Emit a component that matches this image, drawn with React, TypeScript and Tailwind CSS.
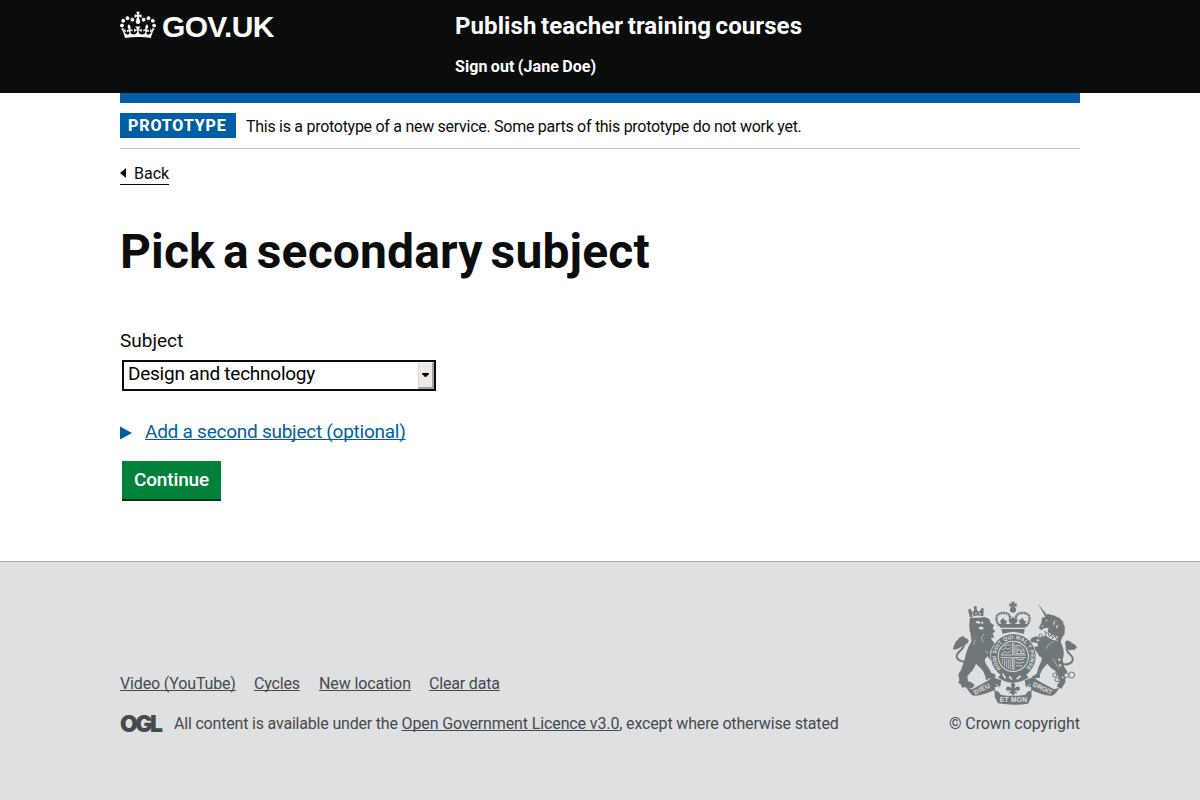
import type { ReactNode } from "react";

function Crown() {
  return (
    <svg viewBox="0 0 132 97" className="h-[30px] w-9 fill-current" aria-hidden="true">
      <path
        fillRule="evenodd"
        d="M25 30.2c3.5 1.5 7.7-.2 9.1-3.7 1.5-3.6-.2-7.8-3.9-9.2-3.6-1.4-7.6.3-9.1 3.9-1.4 3.5.3 7.5 3.9 9zM9 39.5c3.6 1.5 7.8-.2 9.2-3.7 1.5-3.6-.2-7.8-3.9-9.1-3.6-1.5-7.6.2-9.1 3.8-1.4 3.5.3 7.5 3.8 9zM4.4 57.2c3.5 1.5 7.7-.2 9.1-3.8 1.5-3.6-.2-7.7-3.9-9.1-3.5-1.5-7.6.3-9.1 3.8-1.4 3.5.3 7.6 3.9 9.1zm38.3-21.4c3.5 1.5 7.7-.2 9.1-3.8 1.5-3.6-.2-7.7-3.9-9.1-3.6-1.5-7.6.3-9.1 3.8-1.3 3.6.4 7.7 3.9 9.1zm64.4-5.6c-3.6 1.5-7.8-.2-9.1-3.7-1.5-3.6.2-7.8 3.8-9.2 3.6-1.4 7.7.3 9.2 3.9 1.3 3.5-.4 7.5-3.9 9zm15.9 9.3c-3.6 1.5-7.7-.2-9.1-3.7-1.5-3.6.2-7.8 3.7-9.1 3.6-1.5 7.7.2 9.2 3.8 1.5 3.5-.3 7.5-3.8 9zm4.7 17.7c-3.6 1.5-7.8-.2-9.2-3.8-1.5-3.6.2-7.7 3.9-9.1 3.6-1.5 7.7.3 9.2 3.8 1.3 3.5-.4 7.6-3.9 9.1zM89.3 35.8c-3.6 1.5-7.8-.2-9.2-3.8-1.4-3.6.2-7.7 3.9-9.1 3.6-1.5 7.7.3 9.2 3.8 1.4 3.6-.3 7.7-3.9 9.1zM69.7 17.7l8.9 4.7V9.3l-8.9 2.8c-.2-.3-.5-.6-.9-.9L72.4 0H59.6l3.5 11.2c-.3.3-.6.5-.9.9l-8.8-2.8v13.1l8.8-4.7c.3.3.6.7.9.9l-5 15.4v.1c-.2.8-.4 1.6-.4 2.4 0 4.1 3.1 7.5 7 8.1h.2c.3 0 .7.1 1 .1.4 0 .7 0 1-.1h.2c4-.6 7.1-4.1 7.1-8.1 0-.8-.1-1.7-.4-2.4V34l-5.1-15.4c.4-.2.7-.6 1-.9zM66 92.8c16.9 0 32.8 1.1 47.1 3.2 4-16.9 8.9-26.7 14-33.5l-9.6-3.4c1 4.9 1.1 7.2 0 10.2-1.5-1.4-3-4.3-4.2-8.7L108.6 76c2.8-2 5-3.2 7.5-3.3-4.4 9.4-10 11.9-13.6 11.2-4.3-.8-6.3-4.6-5.6-7.9 1-4.7 5.7-5.9 8-.5 4.3-8.7-3-11.4-7.6-8.8 7.1-7.2 7.9-13.5 2.1-21.1-8 6.1-8.1 12.3-4.5 20.8-4.7-5.4-12.1-2.5-9.5 6.2 3.4-5.2 7.9-2 7.2 3.1-.6 4.3-6.4 7.8-13.5 7.2-10.3-.9-10.9-8-11.2-13.8 2.5-.5 7.1 1.8 11 7.3L80.2 60c-4.1 4.4-8 5.3-12.3 5.4 1.4-4.4 8-11.6 8-11.6H55.5s6.4 7.2 7.9 11.6c-4.2-.1-8-1-12.3-5.4l1.4 16.4c3.9-5.5 8.5-7.7 10.9-7.3-.3 5.8-.9 12.8-11.1 13.8-7.2.6-12.9-2.9-13.5-7.2-.7-5 3.8-8.3 7.1-3.1 2.7-8.7-4.6-11.6-9.4-6.2 3.7-8.5 3.6-14.7-4.6-20.8-5.8 7.6-5 13.9 2.2 21.1-4.7-2.6-11.9.1-7.7 8.8 2.3-5.5 7.1-4.2 8.1.5.7 3.3-1.3 7.1-5.7 7.9-3.5.7-9-1.8-13.5-11.2 2.5.1 4.7 1.3 7.5 3.3l-4.7-15.4c-1.2 4.4-2.7 7.2-4.3 8.7-1.1-3-.9-5.3 0-10.2l-9.5 3.4c5 6.9 9.9 16.7 14 33.5 14.8-2.1 30.8-3.2 47.7-3.2z"
      />
    </svg>
  );
}

const DARK = "#6f777b";
const LIGHT = "#dee0e2";

function RoyalArms() {
  return (
    <svg viewBox="36 18 378 312" className="h-[104px] w-[126px]" aria-hidden="true">
      <g fill={DARK}>
        {/* lion */}
        <path d="M91 68C86 76 91 82 87 90C91 98 86 106 92 114C90 122 96 130 94 140C84 154 78 172 74 192C70 206 66 216 63 226L55 238L58 254L55 264L62 268L66 278L76 276L84 282L98 278L104 270L94 262L84 258L82 244L92 232C100 224 104 216 108 206C118 216 124 220 129 228L136 244L138 256L150 250L166 248L166 238L154 234L148 222L138 208L134 194L142 184L152 196L160 206L168 202L164 190L154 180L150 168L160 166L168 176L172 160L166 146L158 138L152 128L163 128L158 114L166 110L158 100L162 90L152 84L148 72L134 66L114 68Z" />
        <path d="M90 68L85 48Q89 44 94 46L98 54L103 43H110L115 52L122 44Q127 43 131 47L130 64Q108 58 90 68Z" />
        <circle cx="89" cy="45" r="4" />
        <circle cx="106" cy="38" r="5" />
        <circle cx="127" cy="43" r="4" />
        <path d="M36 162C44 162 38 148 46 146C44 138 50 138 54 134C56 126 66 126 70 122C72 132 86 128 86 138C84 148 70 152 60 158Q48 166 36 162Z" />
        {/* unicorn */}
        <path d="M294 26L325 65L318 69Z" />
        <path d="M323 56C336 62 344 58 350 66C360 66 362 76 370 80C368 88 378 94 374 102L374 116L366 128L362 142C372 160 374 178 368 194L372 214L382 230L376 248L376 262L364 282L350 274L360 256L352 240L346 228L332 218L322 206L308 222L300 238L300 248L282 250L274 246L290 236L296 216L304 198L306 188L298 184L290 170L276 166L278 156L294 154L292 144L278 142L272 150L267 144L274 130L288 124L300 128L314 122L322 110L326 98L312 100L304 106L296 98L304 84L306 68L316 66Z" />
        <path d="M376 140C386 130 394 146 404 148L412 158C404 158 408 166 400 164L388 166C380 160 374 154 376 140Z" />
        {/* crown */}
        <path d="M181 98H257L262 88C246 84 236 90 219 84C202 90 192 84 177 88Z" />
        <path d="M184 102H254L252 116L219 110L187 116Z" />
        <circle cx="219" cy="44" r="9" />
        <path d="M213 20H225L222 27L230 24V36L223 33L225 42H213L215 33L208 36V24L216 27Z" />
        <path d="M219 64L224 73L233 71L231 82L220 88L207 82L206 71L214 73ZM190 68L194 76L202 78L197 88L184 88L180 78ZM248 68L252 77L259 78L254 88L241 88L236 78Z" />
      </g>
      <g fill="none" stroke={DARK} strokeWidth="7">
        <path d="M80 202C62 200 50 196 50 184C50 168 78 164 72 142" strokeWidth="6" />
        <path d="M366 206C382 212 400 204 398 190C396 178 378 174 380 158C382 146 390 148 396 152" strokeWidth="6" />
        <path d="M179 92C162 74 168 54 188 54C206 52 212 62 213 84M259 92C276 74 270 54 250 54C232 52 226 62 225 84" strokeDasharray="6 1.5" />
      </g>
      <g fill={LIGHT}>
        <path d="M107 80L114 77L121 82L119 86L109 84ZM123 80L131 82L128 87L123 85ZM114 99L124 94L133 101L124 104Z" />
        <circle cx="98" cy="59" r="2.5" />
        <circle cx="108" cy="55" r="2.5" />
        <circle cx="120" cy="56" r="2.5" />
        <path d="M317 74L323 75L318 79ZM304 92L311 89L306 97ZM347 75L341 94L340 83ZM357 88L348 103L349 93Z" />
      </g>
      <g fill="none" stroke={LIGHT} strokeWidth="1.6">
        <path d="M132 116L124 130L130 142M106 134L100 150M135 167L145 175" />
        <path d="M340 140L326 148L318 162M338 190L348 206L357 221" />
      </g>
      <path d="M316 111Q334 130 354 131" fill="none" stroke={LIGHT} strokeWidth="12" />
      <path d="M314 107L318 118L324 112L328 125L334 118L338 130L345 123L351 135L356 126" fill="none" stroke={DARK} strokeWidth="3" />
      {/* chain */}
      <g fill={LIGHT} stroke={DARK} strokeWidth="3">
        <circle cx="302" cy="122" r="5" />
        <circle cx="294" cy="136" r="5" />
        <circle cx="358" cy="194" r="5" />
        <circle cx="361" cy="211" r="5" />
        <circle cx="344" cy="240" r="6" />
        <circle cx="351" cy="254" r="6" />
        <circle cx="368" cy="247" r="4" />
        <circle cx="379" cy="241" r="7" />
        <circle cx="395" cy="240" r="9" />
      </g>
      {/* garter and shield */}
      <circle cx="220" cy="184" r="69" fill={LIGHT} />
      <circle cx="220" cy="184" r="57" fill="none" stroke={DARK} strokeWidth="20" />
      <circle cx="220" cy="184" r="44" fill={DARK} />
      <path id="garter" d="M183.2 220.8A52 52 0 1 1 256.8 220.8" fill="none" />
      <text fill={LIGHT} fontFamily="Liberation Sans" fontWeight="700" fontSize="16">
        <textPath href="#garter" textLength="243" lengthAdjust="spacing">HONI SOIT QUI MAL Y PENSE</textPath>
      </text>
      <g fill="none" stroke={LIGHT} strokeWidth="2.5">
        <path d="M182 180H218V143M222 143V180H258M182 188H218V225M222 225V188H258" />
        <path d="M186 166L196 158L204 163L214 157M185 176L196 170L203 174L214 168M193 153L203 150L213 150" />
        <path d="M226 188L237 195L252 192M226 201L238 205L253 201M228 213L236 212L247 213" />
        <path d="M228 150V176M228 151H240L252 165V176H228M235 157L232 170L240 162L244 173L247 163" />
        <path d="M188 192V206M194 192V214M200 192V219M206 192V222M212 192V223" strokeWidth="2" />
      </g>
      <path d="M180 240Q219 266 260 240" fill="none" stroke={DARK} strokeWidth="20" />
      <path d="M188 236L196 250M207 244L216 253M230 252L242 243" fill="none" stroke={LIGHT} strokeWidth="5" />
      {/* ribbon */}
      <g fill={DARK}>
        <path d="M79 278L96 283L142 258L158 247L184 256L180 277L165 275L165 286C148 290 128 303 100 302C92 298 86 288 79 278Z" />
        <path d="M358 278L342 283L296 258L280 247L254 256L258 277L273 275L273 286C290 290 310 303 336 302C346 298 352 288 358 278Z" />
        <path d="M164 285L176 291L182 299Q219 306 256 299L262 291L274 285L275 305L264 326Q219 333 174 325L164 305Z" />
      </g>
      <path d="M184 264Q219 274 254 264L256 296Q219 304 183 296Z" fill={LIGHT} />
      <path
        d="M219 260L226 270L223 280L229 276Q240 271 240 285L232 288L228 284L225 290H231V295H225L219 303L213 295H207V290H213L210 284L206 288L198 285Q198 271 209 276L215 280L212 270Z"
        fill={DARK}
      />
      <path d="M168 268L180 278L188 297M270 268L258 278L250 297" fill="none" stroke={LIGHT} strokeWidth="3" />
      <g fill={LIGHT} fontFamily="Liberation Sans" fontWeight="700" fontSize="20">
        <text x="105" y="299" textLength="52" transform="rotate(-26 105 299)">DIEU</text>
        <text x="179" y="322" textLength="82">ET MON</text>
        <text x="277" y="273" textLength="62" transform="rotate(25 277 273)">DROIT</text>
      </g>
    </svg>
  );
}

function FooterLink({ children, className }: { children: ReactNode; className: string }) {
  return (
    <a href="#" className={`underline decoration-1 underline-offset-1 [text-decoration-skip-ink:none] ${className}`}>
      {children}
    </a>
  );
}

export default function App() {
  return (
    <div className="flex min-h-screen flex-col overflow-hidden bg-white font-['Roboto','Liberation_Sans',sans-serif] font-[450] text-[#0b0c0c]">
      <header className="h-[93px] bg-[#0b0c0c] text-white">
        <div className="mx-auto flex w-[960px]">
          <a href="#" className="flex w-[335px] items-start gap-1.5 pt-[10px]">
            <Crown />
            <span className="font-['Liberation_Sans',sans-serif] text-[30px] leading-[34px] font-bold tracking-[-0.65px]">GOV.UK</span>
          </a>
          <div className="flex flex-col whitespace-nowrap">
            <a href="#" className="pt-[11px] text-[24px] leading-[30px] font-bold tracking-[0.09px] [word-spacing:-1.6px]">Publish teacher training courses</a>
            <a href="#" className="pt-4 text-[16px] leading-[20px] font-bold tracking-[0.09px] [word-spacing:-0.8px]">Sign out (Jane Doe)</a>
          </div>
        </div>
      </header>

      <div className="mx-auto w-[960px]">
        <div className="h-[10px] bg-[#005ea5]" />
        <div className="flex h-[46px] items-start gap-[10px] border-b border-[#bfc1c3] pt-[10px]">
          <strong className="h-[25px] w-[116px] bg-[#005ea5] pl-2 text-[16px] leading-[25px] font-extrabold tracking-[0.85px] text-white">PROTOTYPE</strong>
          <span className="text-[16px] leading-[27px] tracking-[-0.28px]">This is a prototype of a new service. Some parts of this prototype do not work yet.</span>
        </div>
        <a href="#" className="mt-[14px] flex h-[22px] w-[49px] items-start gap-2 border-b border-[#0b0c0c]">
          <svg viewBox="0 0 6 10" className="mt-[5px] h-[10px] w-[6px] shrink-0 fill-current">
            <path d="M0 5L6 0V10Z" />
          </svg>
          <span className="text-[16px] leading-[22px]">Back</span>
        </a>

        <main className="flex h-[376px] flex-col items-start pt-[42px]">
          <h1 className="text-[48px] leading-[50px] font-bold tracking-[0.14px] [word-spacing:-4px]">Pick a secondary subject</h1>
          <label className="mt-[51px] text-[19px] leading-[25px]">Subject</label>
          <div className="mt-[7px] ml-0.5 flex h-[31px] w-[314px] justify-between border-2 border-[#0b0c0c] pl-1">
            <span className="text-[19px] leading-[24px] tracking-[-0.25px] text-black">Design and technology</span>
            <span className="flex h-[27px] w-4 items-center justify-center border-t border-r-2 border-b-2 border-l border-t-[#f7f5f3] border-r-[#a5a29e] border-b-[#a5a29e] border-l-[#dad7d3] bg-[#edeae6]">
              <svg viewBox="0 0 7 4" className="h-1 w-[7px] fill-black">
                <path d="M0 0H7V1L4 4H3L0 1Z" />
              </svg>
            </span>
          </div>
          <div className="mt-[28px] flex h-[25px] items-start text-[#005ea5]">
            <svg viewBox="0 0 12 14" className="mt-[7px] h-[14px] w-3 fill-current">
              <path d="M0 0.5L12 7L0 13.5Z" />
            </svg>
            <span className="ml-[13px] text-[19px] leading-[25px] tracking-[-0.25px] underline decoration-1 underline-offset-1 [text-decoration-skip-ink:none]">
              Add a second subject (optional)
            </span>
          </div>
          <button className="mt-[17px] ml-0.5 h-[40px] w-[99px] border-b-2 border-[#003618] bg-[#00823b] text-[19px] leading-[38px] font-medium tracking-[-0.15px] text-white">
            Continue
          </button>
        </main>
      </div>

      <footer className="flex-1 border-t border-[#a1acb2] bg-[#dee0e2] text-[16px] leading-[20px] text-[#454a4d]">
        <div className="mx-auto flex w-[960px] justify-between whitespace-nowrap pt-[39px]">
          <div className="pt-[73px]">
            <div className="flex">
              <FooterLink className="w-[134px] tracking-[-0.15px]">Video (YouTube)</FooterLink>
              <FooterLink className="w-[65px] tracking-[-0.18px]">Cycles</FooterLink>
              <FooterLink className="w-[110px] tracking-[-0.1px]">New location</FooterLink>
              <FooterLink className="tracking-[-0.18px]">Clear data</FooterLink>
            </div>
            <div className="mt-5 flex">
              <span className="w-[54px] font-['Inter',sans-serif] text-[23px] font-black tracking-[-2.6px]">OGL</span>
              <span className="tracking-[-0.19px]">All content is available under the&nbsp;</span>
              <FooterLink className="tracking-[-0.12px]">Open Government Licence v3.0</FooterLink>
              <span className="tracking-[-0.16px]">, except where otherwise stated</span>
            </div>
          </div>
          <div className="flex w-[131px] flex-col">
            <div className="ml-[3px]">
              <RoyalArms />
            </div>
            <span className="mt-[9px] tracking-[-0.1px]">© Crown copyright</span>
          </div>
        </div>
      </footer>
    </div>
  );
}
